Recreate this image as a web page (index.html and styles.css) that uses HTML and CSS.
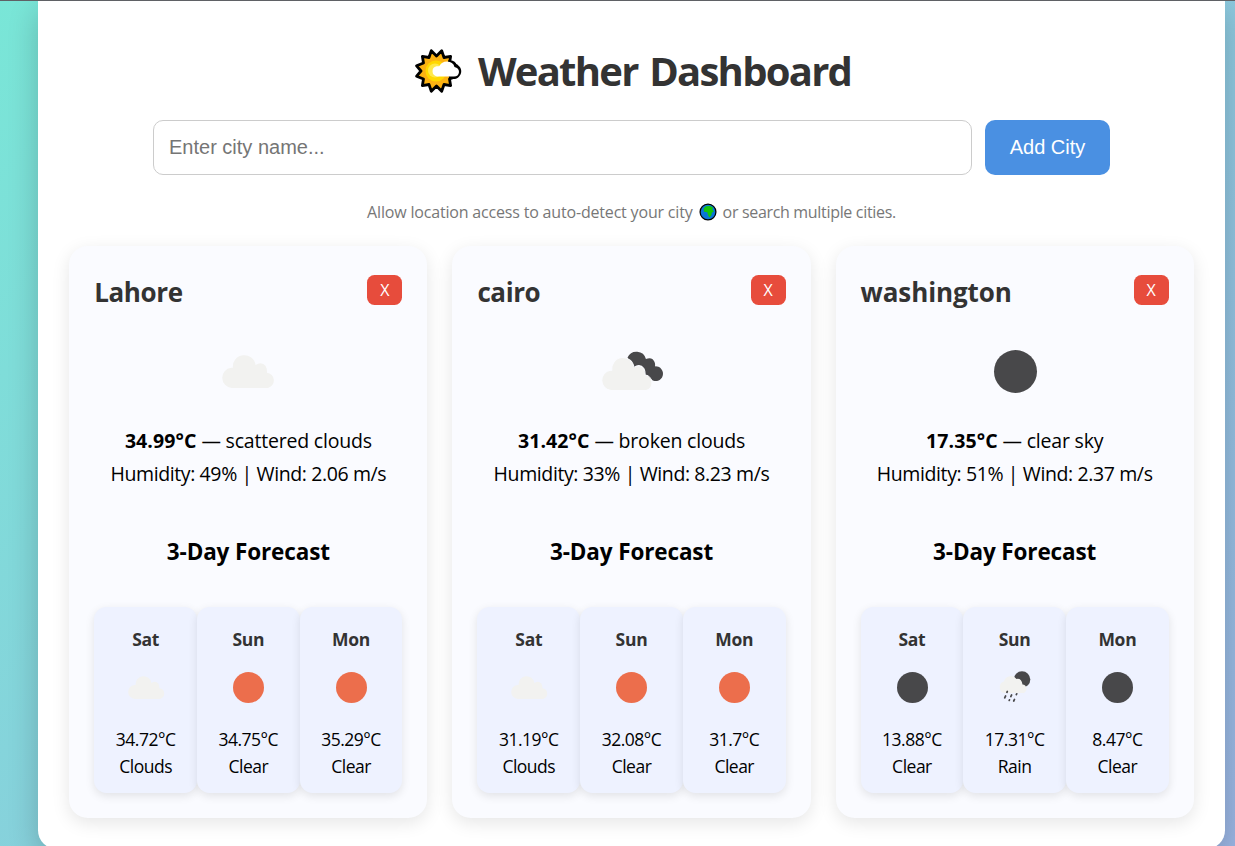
FILE: index.html
```html
<!DOCTYPE html>
<html lang="en">
<head>
<meta charset="utf-8">
<title>Weather Dashboard</title>
<link rel="stylesheet" href="styles.css">
</head>
<body>
<svg class="defs" aria-hidden="true">
  <symbol id="cloud" viewBox="0.8 0.8 50.4 31.8" preserveAspectRatio="none">
    <path fill="#f2f2f0" d="M10 32.5A9.7 9.7 0 0 1 9.5 13.2Q10.3 13 11.2 13.2A10.8 10.8 0 0 1 32.7 10.5Q38.5 6.500 42.300 11.500Q43.700 14 43.600 17.800A7.500 7.500 0 0 1 44.500 32.500Z"/>
  </symbol>
  <symbol id="broken" viewBox="0.3 0.8 60 38.2" preserveAspectRatio="none">
    <path fill="#48484a" d="M26 7A9.500 9.500 0 0 1 43.800 8.500Q49.500 6 52 11Q53 13 52.500 15.500A7 7 0 1 1 49 28L36 26Z"/>
    <path fill="#f2f2f0" stroke="#fafbff" stroke-width="1" d="M10 38.500A9.700 9.700 0 0 1 9.500 19.200H10.700A10.800 10.800 0 0 1 32.200 16.500Q38 12.500 41.800 17.500Q43.200 20 43.100 23.800A7.500 7.500 0 0 1 44 38.500Z"/>
  </symbol>
  <symbol id="rain" viewBox="0 0 32 34">
    <circle cx="23" cy="9.500" r="8.300" fill="#48484a"/>
    <path fill="#f2f2f0" d="M5 23A6 6 0 0 1 5 11.500A7 7 0 0 1 17.500 9Q22.500 8 23.500 14.500A4.500 4.500 0 0 1 25 23Z"/>
    <g fill="none" stroke="#48484a" stroke-width="1.700" stroke-linecap="round"><path d="M8.300 21.500l-.4.800M6.600 26l-.9 1.800M12.600 25l-.8 1.600M17.700 23.800l-.4.800M10.500 29.800l-.3.600M15.500 29.400l-.8 1.600"/></g>
  </symbol>
</svg>
<main class="container">
  <h1 class="title">
    <svg class="sun" viewBox="0 0 48 46">
      <path fill="#fcb212" stroke="#000" stroke-width="2.800" stroke-linejoin="round" d="M21.500 8L26.700 2.700L29 9.500L35.600 8.400L34.500 15L41.800 17.800L37 23L41.800 28.200L34.500 31L35.600 37.600L29 36.500L26.700 43.300L21.500 38L16.300 43.300L14 36.500L7.400 37.600L8.500 31L1.600 28.200L6 23L1.600 17.800L8.500 15L7.400 8.400L14 9.500L16.300 2.700Z"/>
      <circle cx="21" cy="23" r="10.500" fill="#ffd800"/><circle cx="20" cy="22.500" r="7" fill="#ffe94a"/>
      <path fill="#000" d="M33 12.500C38 11.500 41 14 41.700 17C46 18 48 24 44.500 28C42 31.500 38 31.500 34 30.500Z"/>
      <path fill="#fff" d="M22 28.500A5.200 5.200 0 0 1 21.500 18.300Q23.500 18.500 24.500 18Q26.500 13.800 32 13.600Q38 13.800 39.500 19Q44 20 44 24Q43.500 28.500 39 28.500Z"/>
    </svg>
    <span>Weather Dashboard</span>
  </h1>
  <form class="search">
    <input class="city-input" type="text" placeholder="Enter city name...">
    <button class="add" type="button">Add City</button>
  </form>
  <p class="hint"><span>Allow location access to auto-detect your city</span>
    <svg class="globe" viewBox="0 0 18 18"><circle cx="9" cy="9" r="7.900" fill="#0b76d8" stroke="#000" stroke-width="1.300"/><path fill="#16c60c" d="M4.800 5.300L7 3.300L11 3L14 4.500L13.300 6.500L15 8.500L13 9.500L12.300 12.500L10.300 14.500L9 12L8.300 9.300L5 8.800Z"/></svg>
    <span class="hint-end">or search multiple cities.</span></p>
  <section class="cards">
    <article class="card">
      <header class="card-head"><h2>Lahore</h2><button class="remove" type="button">X</button></header>
      <div class="icon"><svg width="53" height="33"><use href="#cloud"/></svg></div>
      <p class="now"><strong>34.99°C</strong> — scattered clouds</p>
      <p class="now detail">Humidity: 49% | Wind: 2.06 m/s</p>
      <h3>3-Day Forecast</h3>
      <div class="forecast">
        <div class="day"><h4>Sat</h4><div class="day-icon"><svg width="37" height="23"><use href="#cloud"/></svg></div><p>34.72°C</p><p>Clouds</p></div>
        <div class="day"><h4>Sun</h4><div class="day-icon"><i class="disc"></i></div><p>34.75°C</p><p>Clear</p></div>
        <div class="day"><h4>Mon</h4><div class="day-icon"><i class="disc"></i></div><p>35.29°C</p><p>Clear</p></div>
      </div>
    </article>
    <article class="card">
      <header class="card-head"><h2>cairo</h2><button class="remove" type="button">X</button></header>
      <div class="icon"><svg width="62" height="40"><use href="#broken"/></svg></div>
      <p class="now"><strong>31.42°C</strong> — broken clouds</p>
      <p class="now detail">Humidity: 33% | Wind: 8.23 m/s</p>
      <h3>3-Day Forecast</h3>
      <div class="forecast">
        <div class="day"><h4>Sat</h4><div class="day-icon"><svg width="37" height="23"><use href="#cloud"/></svg></div><p>31.19°C</p><p>Clouds</p></div>
        <div class="day"><h4>Sun</h4><div class="day-icon"><i class="disc"></i></div><p>32.08°C</p><p>Clear</p></div>
        <div class="day"><h4>Mon</h4><div class="day-icon"><i class="disc"></i></div><p>31.7°C</p><p>Clear</p></div>
      </div>
    </article>
    <article class="card">
      <header class="card-head"><h2 class="wide">washington</h2><button class="remove" type="button">X</button></header>
      <div class="icon"><i class="disc night large"></i></div>
      <p class="now"><strong>17.35°C</strong> — clear sky</p>
      <p class="now detail">Humidity: 51% | Wind: 2.37 m/s</p>
      <h3>3-Day Forecast</h3>
      <div class="forecast">
        <div class="day"><h4>Sat</h4><div class="day-icon"><i class="disc night"></i></div><p>13.88°C</p><p>Clear</p></div>
        <div class="day"><h4>Sun</h4><div class="day-icon"><svg width="32" height="34"><use href="#rain"/></svg></div><p>17.31°C</p><p>Rain</p></div>
        <div class="day"><h4>Mon</h4><div class="day-icon"><i class="disc night"></i></div><p>8.47°C</p><p>Clear</p></div>
      </div>
    </article>
  </section>
</main>
</body>
</html>
```
FILE: styles.css
```css
* { box-sizing: border-box; margin: 0; padding: 0; }
html { overflow: hidden; }
body {
  height: 846px;
  overflow: hidden;
  padding: 0 10px 0 38px;
  border-top: 1px solid #5f6165;
  background: linear-gradient(135deg, #79e6d7, #9ab4e2);
  font-family: "Open Sans", "Noto Sans", sans-serif;
  color: #000;
}
.defs { position: absolute; width: 0; height: 0; }
.container {
  height: 848.250px;
  padding: 42px 31.250px 31.250px;
  background: #fff;
  border-radius: 0 0 18.750px 18.750px;
  box-shadow: 0 10px 31px rgba(0, 0, 0, 0.2);
}
.title {
  display: flex;
  align-items: center;
  justify-content: center;
  gap: 15px;
  height: 55px;
  padding-left: 3px;
  font-size: 40px;
  line-height: 54px;
  letter-spacing: -1.600px;
  word-spacing: 3px;
  color: #333;
  white-space: nowrap;
}
.title span { letter-spacing: -1.750px; }
.sun { width: 48px; height: 46px; }
.search { display: flex; justify-content: center; gap: 13px; margin-top: 22px; }
.city-input {
  width: 819px;
  height: 55px;
  padding: 0 15px;
  border: 1px solid #ccc;
  border-radius: 10px;
  font: 20px "Liberation Sans", sans-serif;
}
.city-input::placeholder { color: #757575; }
.add {
  width: 125px;
  height: 55px;
  border: 0;
  border-radius: 10px;
  background: #4a90e2;
  color: #fff;
  font: 20px "Liberation Sans", sans-serif;
}
.hint {
  display: flex;
  align-items: center;
  justify-content: center;
  gap: 6px;
  height: 24px;
  margin-top: 25px;
  font-size: 16px;
  line-height: 24px;
  letter-spacing: -0.180px;
  color: #777;
  white-space: nowrap;
}
.hint-end { letter-spacing: -0.320px; }
.globe { width: 18px; height: 18px; }
.cards { display: grid; grid-template-columns: repeat(3, 1fr); gap: 25px; margin-top: 22px; }
.card {
  height: 572px;
  padding: 25px;
  border-radius: 18.750px;
  background: #fafbff;
  box-shadow: 0 5px 18px rgba(0, 0, 0, 0.1);
  text-align: center;
}
.card-head { display: flex; justify-content: space-between; height: 42px; padding-top: 4px; }
.card-head h2 { font-size: 26px; line-height: 34px; color: #333; letter-spacing: -0.400px; }
.card-head .wide { letter-spacing: -0.100px; }
.remove {
  width: 35px;
  height: 30px;
  border: 0;
  border-radius: 7.500px;
  background: #e74c3c;
  color: #fff;
  font: 16px/30px "Open Sans", sans-serif;
}
.icon { display: flex; align-items: center; justify-content: center; height: 116px; padding-left: 1px; margin-bottom: 2px; }
.now { height: 33px; font-size: 19.500px; line-height: 33px; letter-spacing: -0.130px; white-space: nowrap; }
.now:first-of-type { margin-top: -7px; }
.now strong { letter-spacing: 0.100px; }
.now:not(.detail) { letter-spacing: -0.200px; }
.detail { letter-spacing: -0.390px; }
h3 { margin-top: 45px; font-size: 22.500px; line-height: 33px; letter-spacing: -0.130px; }
.forecast { display: flex; margin-top: 39px; }
.day {
  flex: 1;
  height: 186px;
  padding-top: 18px;
  border-radius: 12.500px;
  background: #eef2ff;
  box-shadow: 0 3px 10px rgba(0, 0, 0, 0.1);
}
.day h4 { font-size: 17.500px; line-height: 28px; color: #333; letter-spacing: -0.300px; }
.day-icon { display: flex; align-items: center; justify-content: center; height: 68px; margin-bottom: 5px; padding-left: 1px; }
.day p { font-size: 17.500px; line-height: 27px; letter-spacing: -0.500px; }
.disc { width: 31px; height: 31px; border-radius: 50%; background: #ec6e4c; }
.night { background: #48484a; }
.large { width: 43px; height: 43px; }
```
